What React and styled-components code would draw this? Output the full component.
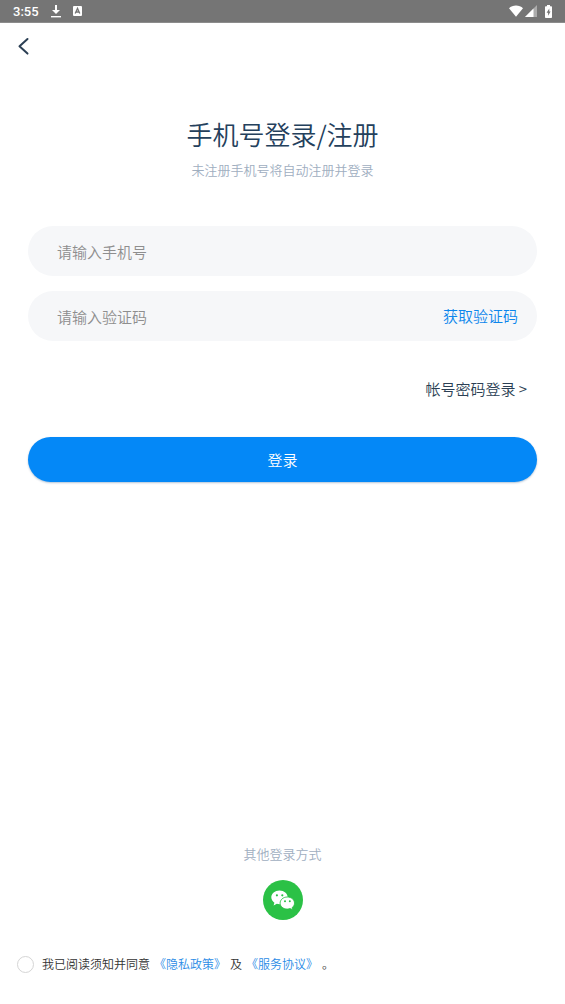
import styled, { createGlobalStyle } from "styled-components";
import { useState } from "react";

const GlobalStyle = createGlobalStyle`
  * {
    box-sizing: border-box;
  }

  body {
    margin: 0;
    background: #fff;
    font-family: "Noto Sans CJK SC", "Noto Sans", sans-serif;
    font-weight: 350;
  }

  button,
  input {
    font-family: inherit;
    font-weight: inherit;
  }
`;

const Page = styled.div`
  display: flex;
  flex-direction: column;
  min-height: 100vh;
`;

const StatusBar = styled.div`
  display: flex;
  align-items: center;
  justify-content: space-between;
  height: 23px;
  padding: 0 13px;
  background: #757575;
  border-bottom: 1px solid #8c8c8c;
  color: #fff;
`;

const StatusGroup = styled.div`
  display: flex;
  align-items: center;
  gap: ${({ $gap }) => $gap}px;

  & svg {
    display: block;
  }
`;

const Clock = styled.span`
  padding-top: 1px;
  font-family: Roboto, sans-serif;
  font-size: 13px;
  font-weight: 500;
  line-height: 21px;
`;

const Header = styled.header`
  display: flex;
  padding: 12px;
`;

const BackButton = styled.button`
  display: flex;
  padding: 0;
  border: none;
  background: none;
  color: #2b3f54;
  cursor: pointer;
`;

const Main = styled.main`
  padding: 45px 28px 0;
`;

const Title = styled.h1`
  margin: 0;
  font-size: 26px;
  font-weight: inherit;
  line-height: 40px;
  text-align: center;
  color: #24405c;
`;

const Subtitle = styled.p`
  margin: 6px 0 0;
  font-size: 13px;
  line-height: 20px;
  text-align: center;
  color: #a0aebf;
`;

const Form = styled.form`
  display: flex;
  flex-direction: column;
  margin-top: 46px;
`;

const Field = styled.div`
  display: flex;
  align-items: center;
  height: 50px;
  margin-bottom: 15px;
  padding: 0 19px 0 29px;
  border-radius: 25px;
  background: #f6f7f9;
`;

const Input = styled.input`
  flex: 1;
  min-width: 0;
  height: 24px;
  padding: 0;
  border: none;
  outline: none;
  background: none;
  font-size: 15px;
  color: #24405c;

  &::placeholder {
    color: #8e8e8e;
    opacity: 1;
  }
`;

const TextButton = styled.button`
  padding: 0;
  border: none;
  background: none;
  font-size: 15px;
  line-height: 24px;
  color: #0c86ec;
  cursor: pointer;
`;

const PasswordLink = styled.a`
  align-self: flex-end;
  margin: 21px 10px 0 0;
  font-size: 15px;
  line-height: 24px;
  text-decoration: none;
  color: #2b3f54;
`;

const SubmitButton = styled.button`
  height: 45px;
  margin-top: 36px;
  border: none;
  border-radius: 23px;
  background: #0488f7;
  box-shadow: 0 1px 2px rgba(0, 60, 120, 0.3);
  font-size: 15px;
  color: #fff;
  cursor: pointer;
`;

const Others = styled.section`
  display: flex;
  flex-direction: column;
  align-items: center;
  gap: 16px;
  margin-top: auto;
  padding-top: 40px;
`;

const OthersTitle = styled.h2`
  margin: 0;
  font-size: 13px;
  font-weight: inherit;
  line-height: 20px;
  color: #a0aebf;
`;

const WechatButton = styled.button`
  display: flex;
  align-items: center;
  justify-content: center;
  width: 40px;
  height: 40px;
  padding: 0;
  border: none;
  border-radius: 50%;
  background: #2bc146;
  cursor: pointer;
`;

const Agreement = styled.div`
  display: flex;
  align-items: center;
  gap: 8px;
  padding: 34px 17px 30px;
  font-size: 12px;
  line-height: 20px;
  color: #333;
`;

const Check = styled.input`
  appearance: none;
  flex: none;
  width: 17px;
  height: 17px;
  margin: 0;
  border: 1px solid #d5d5d5;
  border-radius: 50%;
  cursor: pointer;

  &:checked {
    border: 5px solid #0488f7;
  }
`;

const Terms = styled.div`
  display: flex;
  flex-wrap: wrap;
  column-gap: 4px;
`;

const TermsLink = styled.a`
  text-decoration: none;
  color: #2b8ce6;
`;

function DownloadIcon() {
  return (
    <svg width="12" height="14" viewBox="0 0 12 14" fill="#fff">
      <path d="M5 1h2v5h3L6 10 2 6h3z" />
      <path d="M1 12h10v1.400H1z" />
    </svg>
  );
}

function KeyboardIcon() {
  return (
    <svg width="9" height="10" viewBox="0 0 9 10">
      <rect width="9" height="10" rx="1" fill="#fff" />
      <path
        d="M2.200 7.600 4.500 2.400 6.800 7.600M3.100 6h2.800"
        fill="none"
        stroke="#757575"
        strokeWidth="1.300"
      />
    </svg>
  );
}

function WifiIcon() {
  return (
    <svg width="14" height="12" viewBox="0 0 14 12" fill="#fff">
      <path d="M7 11.800 0 3.200C1.800 1.400 4.200.400 7 .400s5.200 1 7 2.800z" />
    </svg>
  );
}

function SignalIcon() {
  return (
    <svg width="12" height="12" viewBox="0 0 12 12" fill="#fff">
      <path d="M12 0v12H0z" opacity="0.4" />
      <path d="M8.500 3.500V12H0z" />
    </svg>
  );
}

function BatteryIcon() {
  return (
    <svg width="7" height="13" viewBox="0 0 7 13">
      <path
        d="M2 0h3v1.300h1.200c.5 0 .8.300.8.800v10.100c0 .5-.3.800-.8.800H.8c-.5 0-.8-.3-.8-.8V2.100c0-.5.300-.8.800-.8H2z"
        fill="#fff"
      />
      <path d="M4.300 3.500 1.600 7.800h1.500v3l2.500-4.300H4.300z" fill="#757575" />
    </svg>
  );
}

function BackIcon() {
  return (
    <svg width="22" height="22" viewBox="0 0 22 22" fill="none">
      <path
        d="M15.500 4 7.500 11.300 15.500 18.600"
        stroke="currentColor"
        strokeWidth="2"
        strokeLinecap="round"
        strokeLinejoin="round"
      />
    </svg>
  );
}

function WechatIcon() {
  return (
    <svg width="24" height="20" viewBox="0 0 24 20">
      <path
        d="M8.500 .5C4 .5.300 3.500.300 7.300c0 2.200 1.200 4.100 3.100 5.400l-.8 2.800 3.200-1.700c.9.200 1.800.4 2.700.4 4.500 0 8.200-3.100 8.200-6.900S13 .5 8.500.5z"
        fill="#fff"
      />
      <path
        d="M16.300 7c4.100 0 7.200 2.700 7.200 6.100 0 1.900-.9 3.500-2.400 4.600l.6 2.100-2.600-1.200c-.9.300-1.800.5-2.800.5-4.100 0-7.200-2.700-7.200-6S12.200 7 16.300 7z"
        fill="#fff"
        stroke="#2bc146"
        strokeWidth="0.900"
      />
      <g fill="#2bc146">
        <circle cx="5.900" cy="5.300" r="1.100" />
        <circle cx="11.300" cy="5.300" r="1.100" />
        <circle cx="14" cy="11.300" r="1" />
        <circle cx="18.800" cy="11.300" r="1" />
      </g>
    </svg>
  );
}

export default function App() {
  const [phone, setPhone] = useState("");
  const [code, setCode] = useState("");
  const [agreed, setAgreed] = useState(false);

  return (
    <>
      <GlobalStyle />
      <Page>
        <StatusBar>
          <StatusGroup $gap={11}>
            <Clock>3:55</Clock>
            <DownloadIcon />
            <KeyboardIcon />
          </StatusGroup>
          <StatusGroup $gap={8}>
            <StatusGroup $gap={2}>
              <WifiIcon />
              <SignalIcon />
            </StatusGroup>
            <BatteryIcon />
          </StatusGroup>
        </StatusBar>

        <Header>
          <BackButton type="button" aria-label="返回">
            <BackIcon />
          </BackButton>
        </Header>

        <Main>
          <Title>手机号登录/注册</Title>
          <Subtitle>未注册手机号将自动注册并登录</Subtitle>

          <Form onSubmit={(e) => e.preventDefault()}>
            <Field>
              <Input
                type="tel"
                aria-label="手机号"
                placeholder="请输入手机号"
                value={phone}
                onChange={(e) => setPhone(e.target.value)}
              />
            </Field>
            <Field>
              <Input
                type="text"
                inputMode="numeric"
                aria-label="验证码"
                placeholder="请输入验证码"
                value={code}
                onChange={(e) => setCode(e.target.value)}
              />
              <TextButton type="button">获取验证码</TextButton>
            </Field>
            <PasswordLink href="#password">帐号密码登录 &gt;</PasswordLink>
            <SubmitButton type="submit">登录</SubmitButton>
          </Form>
        </Main>

        <Others>
          <OthersTitle>其他登录方式</OthersTitle>
          <WechatButton type="button" aria-label="微信登录">
            <WechatIcon />
          </WechatButton>
        </Others>

        <Agreement>
          <Check
            id="agree"
            type="checkbox"
            checked={agreed}
            onChange={(e) => setAgreed(e.target.checked)}
          />
          <Terms>
            <label htmlFor="agree">我已阅读须知并同意</label>
            <TermsLink href="#privacy">《隐私政策》</TermsLink>
            <span>及</span>
            <TermsLink href="#service">《服务协议》</TermsLink>
            <span>。</span>
          </Terms>
        </Agreement>
      </Page>
    </>
  );
}
